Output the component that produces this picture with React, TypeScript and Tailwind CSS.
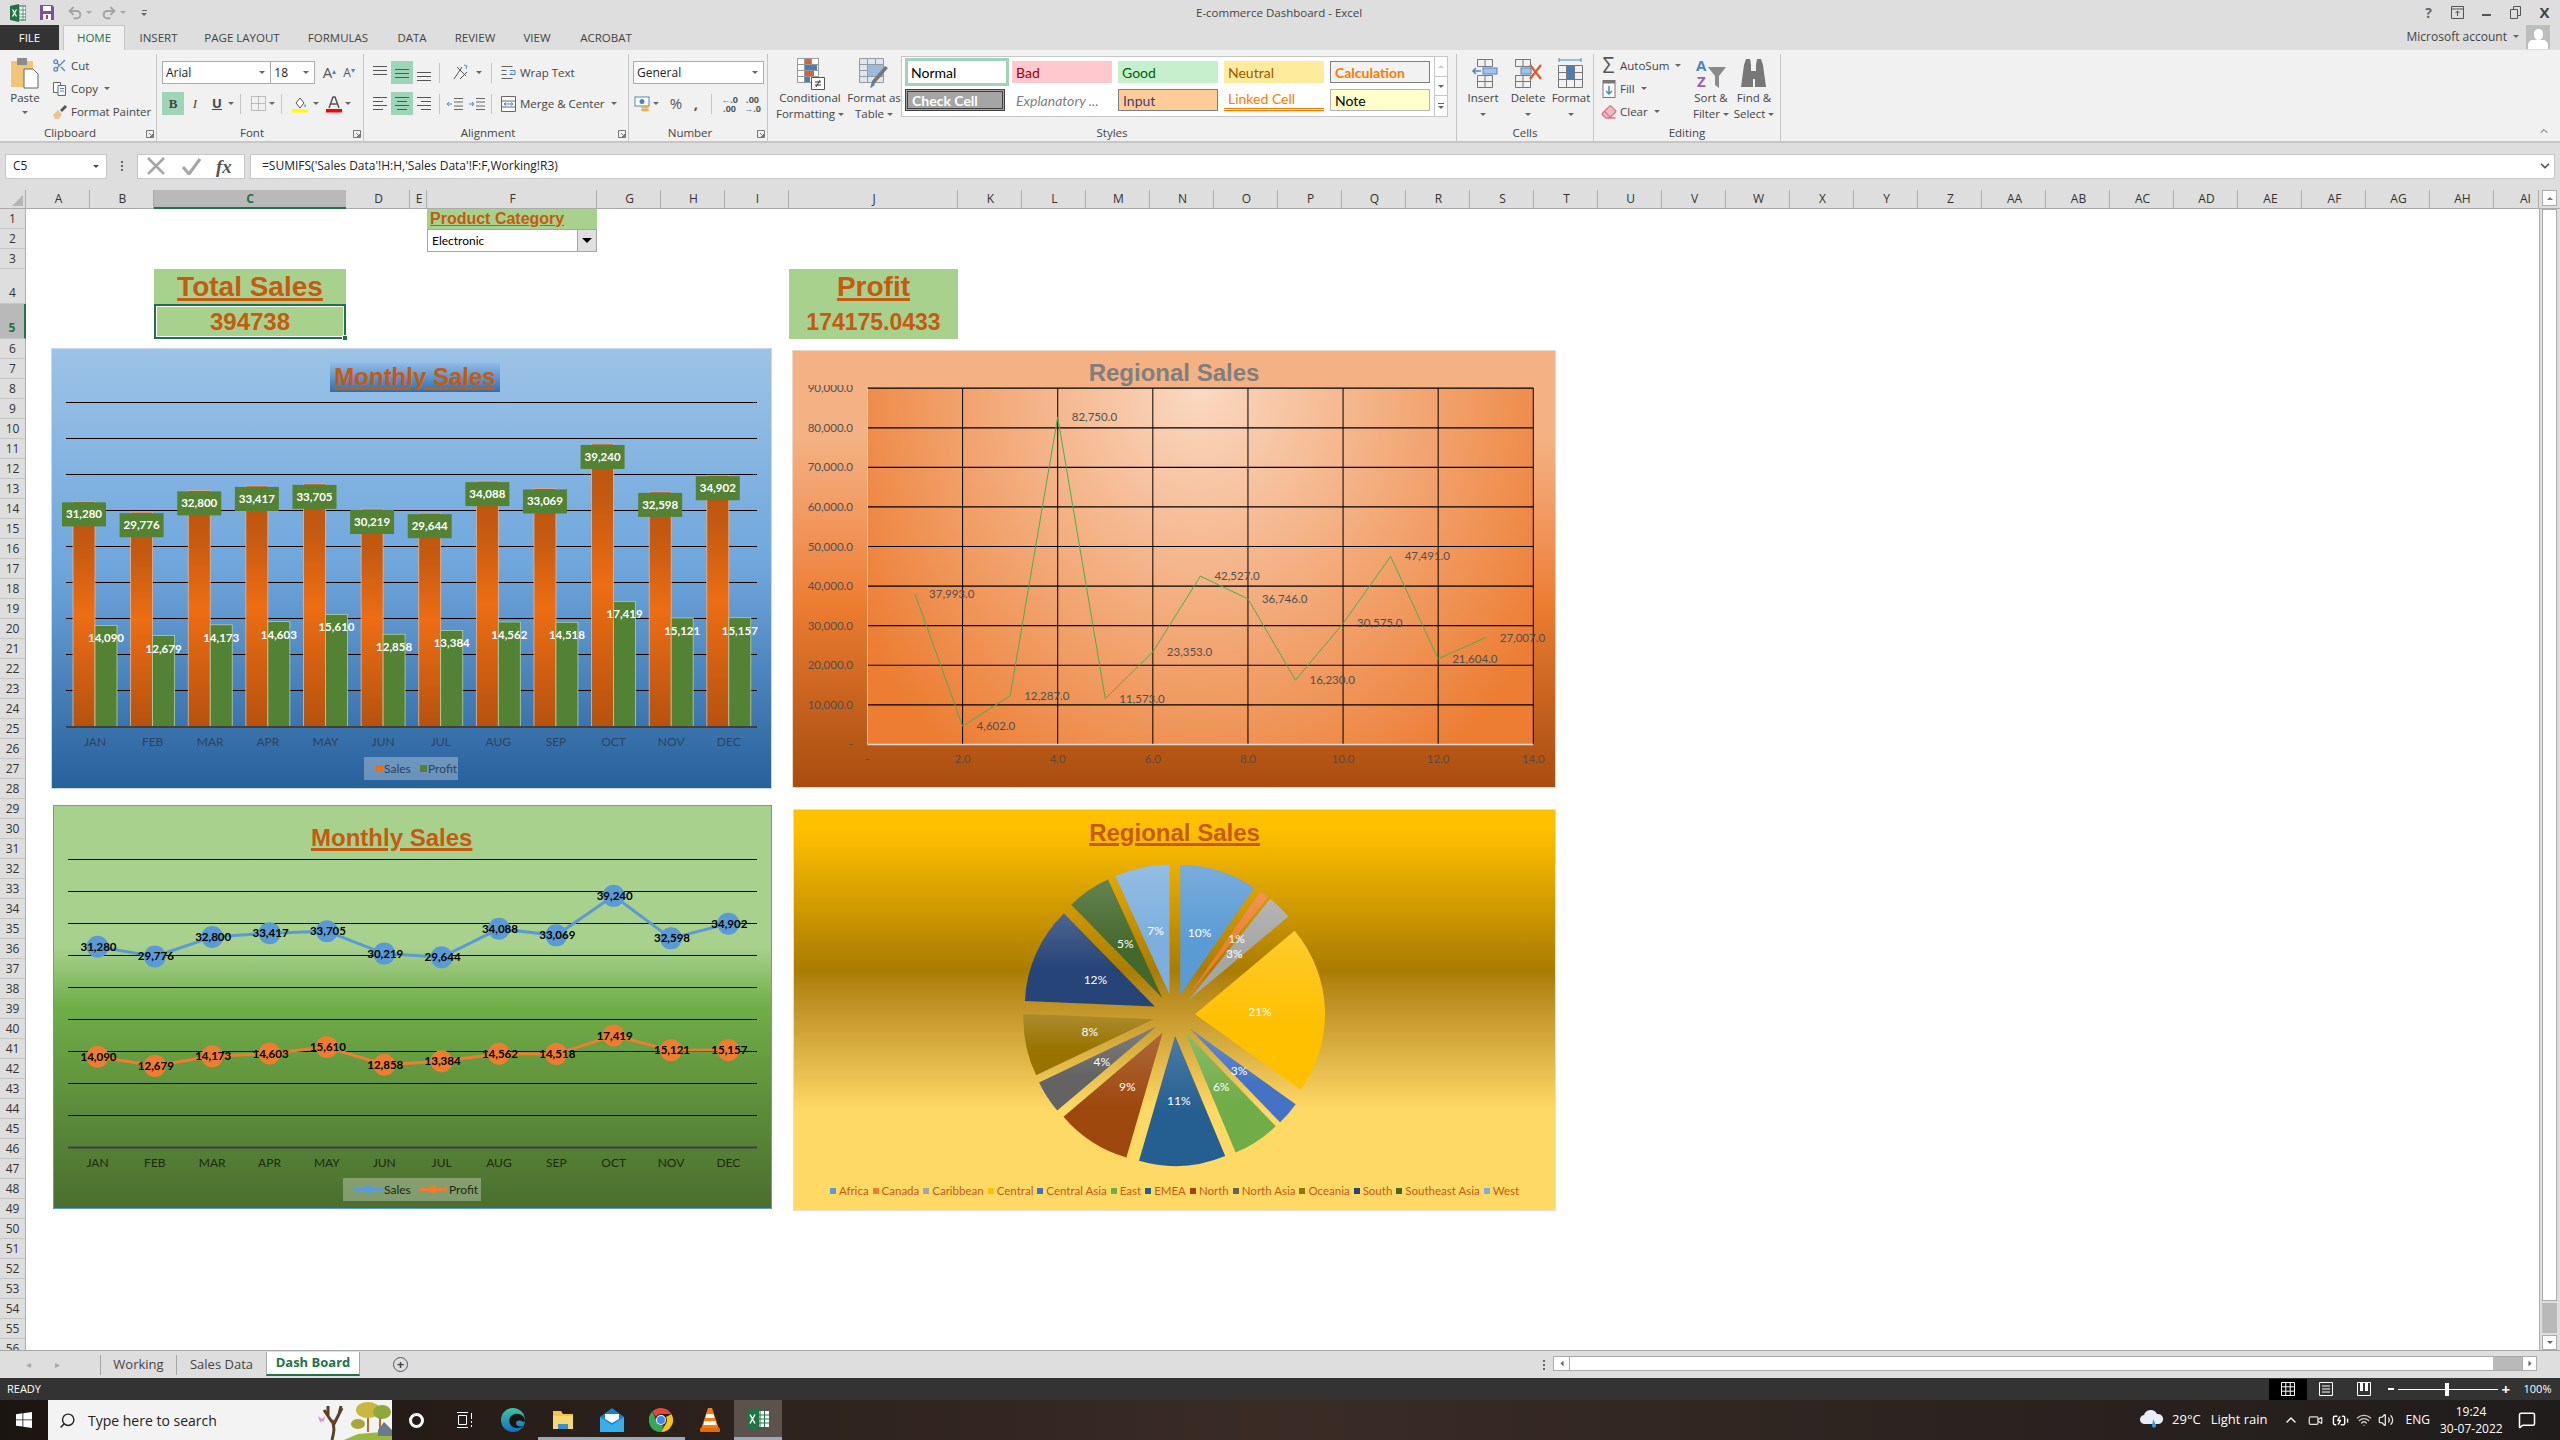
import { Undo2, Redo2, Scissors, Eraser, Search, ChevronUp, ChevronDown, Volume2, MessageSquare, Wifi, BatteryCharging, Video } from 'lucide-react';

const months = ['JAN', 'FEB', 'MAR', 'APR', 'MAY', 'JUN', 'JUL', 'AUG', 'SEP', 'OCT', 'NOV', 'DEC'];
const sales = [31280, 29776, 32800, 33417, 33705, 30219, 29644, 34088, 33069, 39240, 32598, 34902];
const profit = [14090, 12679, 14173, 14603, 15610, 12858, 13384, 14562, 14518, 17419, 15121, 15157];
const fmt = (n: number) => n.toLocaleString('en-US');

const regions = [
  { name: 'Africa', value: 37993, color: '#5b9bd5', swatch: 'bg-[#5b9bd5]' },
  { name: 'Canada', value: 4602, color: '#ed7d31', swatch: 'bg-[#ed7d31]' },
  { name: 'Caribbean', value: 12287, color: '#a5a5a5', swatch: 'bg-[#a5a5a5]' },
  { name: 'Central', value: 82750, color: '#ffc000', swatch: 'bg-[#ffc000]' },
  { name: 'Central Asia', value: 11573, color: '#4472c4', swatch: 'bg-[#4472c4]' },
  { name: 'East', value: 23353, color: '#70ad47', swatch: 'bg-[#70ad47]' },
  { name: 'EMEA', value: 42527, color: '#255e91', swatch: 'bg-[#255e91]' },
  { name: 'North', value: 36746, color: '#9e480e', swatch: 'bg-[#9e480e]' },
  { name: 'North Asia', value: 16230, color: '#636363', swatch: 'bg-[#636363]' },
  { name: 'Oceania', value: 30575, color: '#997300', swatch: 'bg-[#997300]' },
  { name: 'South', value: 47491, color: '#264478', swatch: 'bg-[#264478]' },
  { name: 'Southeast Asia', value: 21604, color: '#43682b', swatch: 'bg-[#43682b]' },
  { name: 'West', value: 27007, color: '#7cafdd', swatch: 'bg-[#7cafdd]' },
];

const columns = [
  { name: 'A', w: 'w-16' }, { name: 'B', w: 'w-16' }, { name: 'C', w: 'w-[192px]' }, { name: 'D', w: 'w-16' },
  { name: 'E', w: 'w-[17px]' }, { name: 'F', w: 'w-[170px]' }, { name: 'G', w: 'w-16' }, { name: 'H', w: 'w-16' },
  { name: 'I', w: 'w-16' }, { name: 'J', w: 'w-[169px]' },
  ...['K', 'L', 'M', 'N', 'O', 'P', 'Q', 'R', 'S', 'T', 'U', 'V', 'W', 'X', 'Y', 'Z', 'AA', 'AB', 'AC', 'AD', 'AE', 'AF', 'AG', 'AH'].map((name) => ({ name, w: 'w-16' })),
  { name: 'AI', w: 'w-[45px] pl-[19px]' },
];

function Caret({ className = 'border-t-[#666]' }: { className?: string }) {
  return <span className={`inline-block w-0 h-0 border-x-[3px] border-t-[3px] border-x-transparent ${className}`} />;
}

function Launcher() {
  return (
    <svg className="absolute right-[2px] top-[6px]" width="8" height="8" viewBox="0 0 8 8" fill="none" stroke="#777">
      <path d="M.5 .5h7v7h-7zM3 3l3.5 3.5M6.5 4v2.5H4" strokeWidth="1" />
    </svg>
  );
}

function Lines({ kind }: { kind: 'left' | 'center' | 'right' | 'top' | 'middle' | 'bottom' }) {
  const y = kind === 'top' ? [2, 6, 10] : kind === 'bottom' ? [8, 12, 16] : kind === 'middle' ? [5, 9, 13] : [2, 6, 10, 14];
  return (
    <svg width="16" height="18" viewBox="0 0 16 18" stroke="#555" strokeWidth="1">
      {y.map((v, i) => {
        const short = i % 2 === 1;
        const x1 = kind === 'right' && short ? 5 : kind === 'center' && short ? 3 : 1;
        const x2 = kind === 'left' && short ? 11 : kind === 'center' && short ? 13 : 15;
        return <line key={v} x1={x1} x2={x2} y1={v + 0.5} y2={v + 0.5} />;
      })}
    </svg>
  );
}

function RibbonGroup({ label, w, launcher, children }: { label: string; w: string; launcher?: boolean; children: React.ReactNode }) {
  return (
    <div className={`${w} flex flex-col h-[88px] mt-[4px] border-r border-[#c6c6c6]`}>
      <div className="flex-1 min-h-0">{children}</div>
      <div className={`relative h-[18px] text-center text-[11.5px] leading-[18px] text-[#444] ${launcher ? 'pr-[16px]' : ''}`}>
        {label}
        {launcher && <Launcher />}
      </div>
    </div>
  );
}

function BigButton({ icon, lines, w }: { icon: React.ReactNode; lines: string[]; w: string }) {
  return (
    <div className={`${w} flex flex-col items-center pt-[3px] text-[11.5px] leading-[16px] text-[#444]`}>
      <div className="h-[33px] flex items-center">{icon}</div>
      <div className="whitespace-nowrap">{lines[0]}</div>
      <div className="whitespace-nowrap flex items-center gap-[3px] h-[16px]">
        {lines[1]}
        <Caret />
      </div>
    </div>
  );
}

function SmallAction({ icon, label, caret }: { icon: React.ReactNode; label: string; caret?: boolean }) {
  return (
    <div className="flex items-center h-[23px] text-[11.5px] text-[#444] whitespace-nowrap">
      <span className="w-[19px] flex justify-center">{icon}</span>
      <span className="ml-[2px]">{label}</span>
      {caret && <span className="ml-[6px] flex"><Caret /></span>}
    </div>
  );
}

function ToolBtn({ children, active, w = 'w-[22px]' }: { children: React.ReactNode; active?: boolean; w?: string }) {
  return (
    <div className={`${w} h-[23px] flex items-center justify-center ${active ? 'bg-[#9fd5b7]' : ''}`}>{children}</div>
  );
}

function GridIcon({ children }: { children?: React.ReactNode }) {
  return (
    <svg width="30" height="33" viewBox="0 0 30 33" fill="none" stroke="#777">
      {children}
    </svg>
  );
}

function Gallery() {
  const base = 'h-[22px] px-[4px] flex items-center text-[14px] font-[\'Lato\',sans-serif] whitespace-nowrap';
  return (
    <div className="w-[547px] h-[61px] mt-[2px] bg-white border border-[#c6c6c6] flex">
      <div className="flex-1 grid grid-cols-[107px_106px_106px_106px_104px] grid-rows-[30px_26px] items-center pl-[3px]">
        <div className="w-[104px] h-[28px] px-[3px] flex items-center text-[14px] font-['Lato',sans-serif] border-[3px] border-[#9fd5b7] text-black">Normal</div>
        <div className={`${base} w-[100px] bg-[#ffc7ce] text-[#9c0006]`}>Bad</div>
        <div className={`${base} w-[100px] bg-[#c6efce] text-[#006100]`}>Good</div>
        <div className={`${base} w-[100px] bg-[#ffeb9c] text-[#9c5700]`}>Neutral</div>
        <div className={`${base} w-[100px] bg-[#f2f2f2] text-[#fa7d00] font-bold border border-[#7f7f7f]`}>Calculation</div>
        <div className={`${base} w-[100px] bg-[#a5a5a5] text-white font-bold border-[3px] border-double border-[#3f3f3f]`}>Check Cell</div>
        <div className={`${base} w-[100px] text-[#7f7f7f] italic`}>Explanatory ...</div>
        <div className={`${base} w-[100px] bg-[#ffcc99] text-[#3f3f76] border border-[#7f7f7f]`}>Input</div>
        <div className={`${base} w-[100px] text-[#fa7d00] border-b-[3px] border-double border-[#fa7d00]`}>Linked Cell</div>
        <div className={`${base} w-[100px] bg-[#ffffcc] text-black border border-[#b2b2b2]`}>Note</div>
      </div>
      <div className="w-[14px] flex flex-col border-l border-[#c6c6c6]">
        <div className="h-[20px] flex items-center justify-center border-b border-[#c6c6c6]"><Caret className="border-t-[#ccc] rotate-180" /></div>
        <div className="h-[19px] flex items-center justify-center border-b border-[#c6c6c6]"><Caret /></div>
        <div className="h-[20px] flex flex-col items-center justify-center gap-[2px]"><span className="w-[6px] h-px bg-[#666]" /><Caret /></div>
      </div>
    </div>
  );
}

function Ribbon() {
  return (
    <div className="flex h-[93px] bg-[#f1f1f1] border-b-2 border-[#c6c6c6]">
      <RibbonGroup label="Clipboard" w="w-[157px]" launcher>
        <div className="flex">
          <div className="w-[50px] flex flex-col items-center pt-[3px] text-[11.5px] text-[#444]">
            <svg width="30" height="32" viewBox="0 0 30 32">
              <rect x="1" y="4" width="22" height="26" rx="1" fill="#f0c674" />
              <rect x="7" y="1" width="10" height="7" fill="#8c8c8c" />
              <path d="M14 12h9l5 5v14H14z" fill="#fff" stroke="#666" />
            </svg>
            <span className="mt-[1px] leading-[16px]">Paste</span>
            <span className="mt-[5px] flex"><Caret /></span>
          </div>
          <div>
            <SmallAction icon={<Scissors size={15} color="#5b7fb5" />} label="Cut" />
            <SmallAction
              icon={
                <svg width="15" height="15" viewBox="0 0 15 15" fill="#fff" stroke="#666">
                  <path d="M1.5 1.5h7v10h-7z" />
                  <path d="M6 4.5h7.5v10H6z" />
                  <path d="M8 7.5h4M8 10h4" stroke="#5b7fb5" />
                </svg>
              }
              label="Copy"
              caret
            />
            <SmallAction
              icon={
                <svg width="16" height="16" viewBox="0 0 16 16">
                  <path d="M1 11l5-5 4 4-3 5H3z" fill="#e8c48e" />
                  <path d="M8 6l5-5 2 2-5 5z" fill="#555" />
                </svg>
              }
              label="Format Painter"
            />
          </div>
        </div>
      </RibbonGroup>

      <RibbonGroup label="Font" w="w-[207px]" launcher>
        <div className="pt-[7px] pl-[5px]">
          <div className="flex items-center h-[23px] text-[12px] text-[#222]">
            <div className="w-[111px] h-full bg-white border border-[#ababab] pl-[3px] flex items-center justify-between pr-[5px]">
              Arial <Caret />
            </div>
            <div className="w-[44px] h-full bg-white border border-[#ababab] border-l-0 pl-[3px] flex items-center justify-between pr-[5px]">
              18 <Caret />
            </div>
            <span className="ml-[8px] w-[20px] text-[15px] text-[#555]">A<sup className="text-[#4a86c5] text-[8px]">▴</sup></span>
            <span className="ml-[1px] w-[20px] text-[12px] text-[#555]">A<sup className="text-[#4a86c5] text-[8px]">▾</sup></span>
          </div>
          <div className="flex items-center h-[23px] mt-[8px] text-[13px] text-[#444]">
            <ToolBtn active><span className="font-bold font-['Liberation_Serif',serif]">B</span></ToolBtn>
            <ToolBtn><span className="italic font-['Liberation_Serif',serif]">I</span></ToolBtn>
            <ToolBtn><span className="underline font-bold">U</span></ToolBtn>
            <span className="w-[12px] flex"><Caret /></span>
            <span className="w-px h-[20px] bg-[#c6c6c6] mr-[6px]" />
            <ToolBtn>
              <svg width="15" height="15" viewBox="0 0 15 15" fill="none" stroke="#888" strokeDasharray="1 1"><path d="M.5 .5h14v14H.5zM7.5 .5v14M.5 7.5h14" /></svg>
            </ToolBtn>
            <span className="w-[12px] flex"><Caret /></span>
            <span className="w-px h-[20px] bg-[#c6c6c6] mr-[5px]" />
            <ToolBtn w="w-[26px]">
              <svg width="18" height="18" viewBox="0 0 18 18">
                <path d="M5 8l4-5 4 5-4 5z" fill="#fff" stroke="#555" />
                <path d="M14 9c1 1.5 1.5 2.500 0 3-1-.5-1-1.500 0-3" fill="#4a86c5" />
                <rect x="1" y="14" width="16" height="3.500" fill="#ffff00" />
              </svg>
            </ToolBtn>
            <span className="w-[10px] flex"><Caret /></span>
            <ToolBtn>
              <svg width="18" height="18" viewBox="0 0 18 18">
                <path d="M4 13L8 2h2l4 11M6 9h6" fill="none" stroke="#555" strokeWidth="1.500" />
                <rect x="1" y="14" width="16" height="3.500" fill="#ff0000" />
              </svg>
            </ToolBtn>
            <span className="w-[8px] flex"><Caret /></span>
          </div>
        </div>
      </RibbonGroup>

      <RibbonGroup label="Alignment" w="w-[265px]" launcher>
        <div className="pt-[7px] pl-[5px]">
          <div className="flex items-center h-[23px]">
            <ToolBtn><Lines kind="top" /></ToolBtn>
            <ToolBtn active><Lines kind="middle" /></ToolBtn>
            <ToolBtn><Lines kind="bottom" /></ToolBtn>
            <span className="w-px h-[20px] bg-[#c6c6c6] mx-[4px]" />
            <span className="w-[32px] flex justify-center">
              <svg width="17" height="17" viewBox="0 0 17 17" fill="none" stroke="#555"><path d="M2 15L10 3M5 3l9 9M8 15l7-7" /><path d="M12 1l3 1-1 3" stroke="#4a86c5" /></svg>
            </span>
            <span className="w-[15px] flex"><Caret /></span>
            <span className="w-px h-[20px] bg-[#c6c6c6] mr-[7px]" />
            <SmallAction
              icon={<svg width="15" height="16" viewBox="0 0 15 16" fill="none" stroke="#666"><path d="M.5 1.500h11M.5 5.500h5M.5 9.500h5M.5 13.500h11" /><path d="M9 5.500h5v4H9l2-2" stroke="#4a86c5" /></svg>}
              label="Wrap Text"
            />
          </div>
          <div className="flex items-center h-[23px] mt-[8px]">
            <ToolBtn><Lines kind="left" /></ToolBtn>
            <ToolBtn active><Lines kind="center" /></ToolBtn>
            <ToolBtn><Lines kind="right" /></ToolBtn>
            <span className="w-px h-[20px] bg-[#c6c6c6] mx-[4px]" />
            <ToolBtn>
              <svg width="16" height="14" viewBox="0 0 16 14" fill="none" stroke="#666"><path d="M7 1.500h9M7 5h9M7 9h9M7 12.500h9" /><path d="M5 7H0l2-2M0 7l2 2" stroke="#4a86c5" /></svg>
            </ToolBtn>
            <ToolBtn>
              <svg width="16" height="14" viewBox="0 0 16 14" fill="none" stroke="#666"><path d="M7 1.500h9M7 5h9M7 9h9M7 12.500h9" /><path d="M0 7h5L3 5M5 7L3 9" stroke="#4a86c5" /></svg>
            </ToolBtn>
            <span className="w-px h-[20px] bg-[#c6c6c6] ml-[3px] mr-[7px]" />
            <SmallAction
              icon={<svg width="15" height="16" viewBox="0 0 15 16" fill="#fff" stroke="#666"><path d="M.5 .5h14v15H.5zM.5 5h14M.5 11h14" /><path d="M3 8h9M3 8l2-1.500M3 8l2 1.500M12 8l-2-1.500M12 8l-2 1.500" stroke="#4a86c5" /></svg>}
              label="Merge & Center"
              caret
            />
          </div>
        </div>
      </RibbonGroup>

      <RibbonGroup label="Number" w="w-[139px]" launcher>
        <div className="pt-[7px] pl-[4px]">
          <div className="w-[131px] h-[23px] bg-white border border-[#ababab] pl-[3px] pr-[5px] flex items-center justify-between text-[12px] text-[#222]">
            General <Caret />
          </div>
          <div className="flex items-center h-[23px] mt-[8px] text-[#555]">
            <span className="w-[20px] flex justify-center">
              <svg width="18" height="18" viewBox="0 0 18 18"><rect x="1" y="2" width="14" height="9" fill="#fff" stroke="#4a86c5" /><circle cx="8" cy="6.500" r="2.500" fill="#4a86c5" /><ellipse cx="11" cy="12" rx="4" ry="1.500" fill="#e3b54c" /><ellipse cx="11" cy="15" rx="4" ry="1.500" fill="#e3b54c" /></svg>
            </span>
            <span className="w-[12px] flex"><Caret /></span>
            <span className="w-[22px] text-center text-[15px]">%</span>
            <span className="w-[18px] text-center text-[15px] font-bold">,</span>
            <span className="w-px h-[20px] bg-[#c6c6c6] mx-[6px]" />
            <span className="w-[23px] text-[9px] leading-[9px] text-center font-bold"><span className="text-[#4a86c5]">←</span>.0<br />.00</span>
            <span className="w-[23px] text-[9px] leading-[9px] text-center font-bold">.00<br /><span className="text-[#4a86c5]">→</span>.0</span>
          </div>
        </div>
      </RibbonGroup>

      <RibbonGroup label="Styles" w="w-[689px]">
        <div className="flex pl-[8px]">
          <BigButton
            w="w-[68px]"
            lines={['Conditional', 'Formatting']}
            icon={
              <svg width="30" height="33" viewBox="0 0 30 33" fill="#fff" stroke="#999">
                <path d="M2.500 1.500h21v24h-21z" />
                <path d="M9.500 1.500v24M16.500 1.500v24M2.500 7.500h21M2.500 13.500h21M2.500 19.500h21" />
                <rect x="10" y="2" width="6" height="5" fill="#d9603b" stroke="none" />
                <rect x="10" y="8" width="12" height="5" fill="#4a7fb5" stroke="none" />
                <rect x="10" y="14" width="9" height="5" fill="#d9603b" stroke="none" />
                <rect x="10" y="20" width="5" height="5" fill="#4a7fb5" stroke="none" />
                <path d="M16.500 20.500h13v12h-13z" stroke="#555" />
                <path d="M20 25h6M20 28h6M25 23l-4 7" stroke="#333" />
              </svg>
            }
          />
          <BigButton
            w="w-[60px]"
            lines={['Format as', 'Table']}
            icon={
              <svg width="32" height="33" viewBox="0 0 32 33" fill="#dce6f2" stroke="#999">
                <path d="M1.500 1.500h24v24h-24z" />
                <path d="M9.500 1.500v24M17.500 1.500v24M1.500 7.500h24M1.500 13.500h24M1.500 19.500h24" />
                <rect x="10" y="8" width="15" height="11" fill="#9db9de" stroke="none" />
                <path d="M30 11l-12 14-5 6 1-7 13-15z" fill="#777" stroke="none" />
                <path d="M14 25l3 3-5 3z" fill="#4a86c5" stroke="none" />
              </svg>
            }
          />
          <span className="-ml-[3px]"><Gallery /></span>
        </div>
      </RibbonGroup>

      <RibbonGroup label="Cells" w="w-[137px]">
        <div className="grid grid-cols-[48px_42px_44px] pl-[2px]">
          {[
            { name: 'Insert', path: <><path d="M9.500 2.500h15v7h-15zM17 2.500v7M9.500 18.500h15v12h-15zM17 18.500v12M9.500 24.500h15" /><rect x="15" y="11" width="14" height="6" fill="#a7c3e4" stroke="#4a86c5" /><path d="M13 14H5m3-3l-3 3 3 3" stroke="#4a86c5" strokeWidth="1.500" /></> },
            { name: 'Delete', path: <><path d="M2.500 2.500h15v7h-15zM10 2.500v7M2.500 18.500h15v12h-15zM10 18.500v12M2.500 24.500h15" /><rect x="8" y="11" width="10" height="6" fill="#a7c3e4" stroke="#4a86c5" /><path d="M17 8l11 14M28 8L17 22" stroke="#d9603b" strokeWidth="2.500" /></> },
            { name: 'Format', path: <><path d="M3 3h22M3 1v4M25 1v4" stroke="#4a86c5" /><path d="M2.500 8.500h24v22h-24zM2.500 15.500h24M2.500 22.500h24M10.500 8.500v22M18.500 8.500v22" /><rect x="11" y="9" width="7" height="13" fill="#4a7fb5" stroke="none" /></> },
          ].map((c) => (
            <div key={c.name} className="flex flex-col items-center pt-[3px] text-[11.5px] leading-[16px] text-[#444]">
              <div className="h-[33px] flex items-center"><GridIcon>{c.path}</GridIcon></div>
              <div>{c.name}</div>
              <div className="h-[16px] flex items-center"><Caret /></div>
            </div>
          ))}
        </div>
      </RibbonGroup>

      <RibbonGroup label="Editing" w="w-[187px]">
        <div className="flex pl-[5px]">
          <div className="w-[91px]">
            <SmallAction icon={<span className="text-[21px] leading-none text-[#555]">Σ</span>} label="AutoSum" caret />
            <SmallAction
              icon={<svg width="14" height="18" viewBox="0 0 14 18"><rect x="1" y=".5" width="12" height="17" fill="#fff" stroke="#777" /><rect x="1" y=".5" width="12" height="3" fill="#777" /><path d="M7 6v8m-3-3l3 3 3-3" stroke="#4a86c5" strokeWidth="1.500" fill="none" /></svg>}
              label="Fill"
              caret
            />
            <SmallAction icon={<Eraser size={16} color="#d9738a" fill="#f3b6c3" />} label="Clear" caret />
          </div>
          <BigButton
            w="w-[42px]"
            lines={['Sort &', 'Filter']}
            icon={
              <svg width="32" height="33" viewBox="0 0 32 33">
                <text x="1" y="14" fontSize="15" fontWeight="700" fill="#4a86c5">A</text>
                <text x="2" y="30" fontSize="15" fontWeight="700" fill="#9b5fb5">Z</text>
                <path d="M13 10h18l-7 9v12l-4-3v-9z" fill="#8a8a8a" />
              </svg>
            }
          />
          <BigButton
            w="w-[44px]"
            lines={['Find &', 'Select']}
            icon={
              <svg width="28" height="33" viewBox="0 0 28 33" fill="#777">
                <path d="M4 8l2-6h4l1 6v6h5V8l1-6h4l2 6 3 22H15v-8h-2v8H1z" />
              </svg>
            }
          />
        </div>
      </RibbonGroup>

      <div className="flex-1 flex items-end justify-end pr-[10px] pb-[4px]">
        <ChevronUp size={12} color="#555" />
      </div>
    </div>
  );
}

function TitleBar() {
  return (
    <div className="h-[25px] flex items-center relative text-[12px] text-[#444]">
      <div className="flex items-center">
        <span className="ml-[10px]">
          <svg width="16" height="18" viewBox="0 0 16 18">
            <rect x="5" y="2" width="11" height="14" fill="#fff" stroke="#217346" />
            <path d="M9 2v14M13 2v14M5 6h11M5 10h11M5 13h11" stroke="#217346" strokeWidth=".7" />
            <path d="M0 2l9-2v18l-9-2z" fill="#217346" />
            <path d="M2.500 5.500l4 7M6.500 5.500l-4 7" stroke="#fff" strokeWidth="1.300" />
          </svg>
        </span>
        <span className="ml-[13px]">
          <svg width="16" height="17" viewBox="0 0 16 17">
            <path d="M1 1h12l2 2v13H1z" fill="#7e4fa0" />
            <rect x="4" y="2" width="8" height="5" fill="#fff" />
            <rect x="4" y="10" width="8" height="6" fill="#fff" />
            <rect x="7" y="11" width="2" height="4" fill="#7e4fa0" />
          </svg>
        </span>
        <span className="ml-[12px] flex items-center gap-[3px]"><Undo2 size={16} color="#a5a5a5" strokeWidth={3} /><Caret className="border-t-[#a5a5a5]" /></span>
        <span className="ml-[9px] flex items-center gap-[3px]"><Redo2 size={16} color="#a5a5a5" strokeWidth={3} /><Caret className="border-t-[#a5a5a5]" /></span>
        <span className="ml-[15px] flex flex-col items-center gap-[2px]"><span className="w-[5px] h-px bg-[#666]" /><Caret /></span>
      </div>
      <div className="absolute left-[1196px] w-[166px] text-center whitespace-nowrap text-[11.5px]">E-commerce Dashboard - Excel</div>
      <div className="ml-auto flex items-center text-[#666] font-bold h-full">
        <span className="w-[29px] text-center text-[14px]">?</span>
        <span className="w-[29px] flex justify-center">
          <svg width="13" height="13" viewBox="0 0 13 13" fill="none" stroke="#555"><path d="M.5 .5h12v12H.5zM.5 3h12M6.500 10V5M4.500 7l2-2 2 2" /></svg>
        </span>
        <span className="w-[29px] flex justify-center"><span className="w-[9px] h-[2px] bg-[#555] mt-[5px]" /></span>
        <span className="w-[29px] flex justify-center">
          <svg width="11" height="13" viewBox="0 0 11 13" fill="#dedede" stroke="#555"><path d="M3.500 .5h7v9h-7z" /><path d="M.5 3.500h7v9h-7z" /></svg>
        </span>
        <span className="w-[29px] text-center text-[15px] text-[#444] mr-[1px]">X</span>
      </div>
    </div>
  );
}

function TabRow() {
  const tabs = [
    { t: 'INSERT', w: 'w-[67px]' }, { t: 'PAGE LAYOUT', w: 'w-[100px]' }, { t: 'FORMULAS', w: 'w-[92px]' }, { t: 'DATA', w: 'w-[56px]' },
    { t: 'REVIEW', w: 'w-[70px]' }, { t: 'VIEW', w: 'w-[54px]' }, { t: 'ACROBAT', w: 'w-[84px]' },
  ];
  return (
    <div className="h-[25px] flex items-end relative text-[11.5px] text-[#444]">
      <div className="w-[59px] h-[25px] bg-[#333] text-white flex items-center justify-center">FILE</div>
      <div className="ml-[4px] w-[62px] h-[25px] bg-[#f1f1f1] border border-b-0 border-[#c6c6c6] text-[#217346] flex items-center justify-center">HOME</div>
      {tabs.map((t) => (
        <div key={t.t} className={`${t.w} h-[25px] flex items-center justify-center whitespace-nowrap`}>{t.t}</div>
      ))}
      <div className="ml-auto flex items-center h-[25px] mb-[1px]">
        <span className="text-[12px]">Microsoft account</span>
        <span className="ml-[6px] flex"><Caret /></span>
        <span className="ml-[7px] mr-[10px] w-[24px] h-[24px] bg-[#bdbdbd] flex flex-col items-center justify-end overflow-hidden">
          <span className="w-[9px] h-[11px] rounded-full bg-white" />
          <span className="w-[20px] h-[9px] bg-white rounded-t-[5px]" />
        </span>
      </div>
    </div>
  );
}

function FormulaBar() {
  return (
    <div className="h-[47px] flex items-center pl-[5px] pr-[5px] pt-[10px] pb-[11px]">
      <div className="w-[102px] h-[25px] bg-white border border-[#c6c6c6] flex items-center justify-between pl-[7px] pr-[7px] text-[12px] text-[#222]">
        C5 <Caret className="border-t-[#444]" />
      </div>
      <div className="w-[30px] flex flex-col items-center gap-[2px]">
        <span className="w-[2px] h-[2px] bg-[#666]" />
        <span className="w-[2px] h-[2px] bg-[#666]" />
        <span className="w-[2px] h-[2px] bg-[#666]" />
      </div>
      <div className="w-[108px] h-[25px] bg-white border border-[#c6c6c6] flex items-center">
        <svg className="ml-[9px]" width="18" height="18" viewBox="0 0 18 18" stroke="#a6a6a6" strokeWidth="2.500" fill="none"><path d="M1 1l16 16M17 1L1 17" /></svg>
        <svg className="ml-[17px]" width="19" height="17" viewBox="0 0 19 17" stroke="#a6a6a6" strokeWidth="3" fill="none"><path d="M1 9l6 7L18 1" /></svg>
        <span className="ml-[15px] text-[19px] italic font-bold font-['Liberation_Serif',serif] text-[#555] leading-none">fx</span>
      </div>
      <div className="ml-[5px] flex-1 h-[25px] bg-white border border-[#c6c6c6] flex items-center justify-between pl-[11px] pr-[2px] text-[12px] text-[#222]">
        <span>=SUMIFS('Sales Data'!H:H,'Sales Data'!F:F,Working!R3)</span>
        <ChevronDown size={14} color="#555" strokeWidth={3} />
      </div>
    </div>
  );
}

function ColumnHeader() {
  return (
    <div className="h-[19px] flex text-[12px] text-[#333]">
      <div className="w-[26px] border-b border-r border-[#ababab] flex items-end justify-end pr-[2px] pb-[2px]">
        <svg width="11" height="11" viewBox="0 0 11 11"><path d="M11 0v11H0z" fill="#b5b5b5" /></svg>
      </div>
      {columns.map((c) =>
        c.name === 'C' ? (
          <div key={c.name} className={`${c.w} bg-[#b9b9b9] border-b-2 border-[#217346] flex items-center justify-center font-bold text-[#217346]`}>{c.name}</div>
        ) : (
          <div key={c.name} className={`${c.w} pl-[2px] border-b border-r border-[#ababab] flex items-center justify-center`}>{c.name}</div>
        ),
      )}
      <div className="flex-1 border-b border-[#ababab] pl-[3px] pr-[3px]">
        <div className="w-[15px] h-[16px] bg-white border border-[#ababab] flex items-center justify-center"><Caret className="border-t-[#777] rotate-180" /></div>
      </div>
    </div>
  );
}

function RowHeader() {
  const rows = Array.from({ length: 56 }, (_, i) => i + 1);
  return (
    <div className="w-[26px] shrink-0 overflow-hidden text-[12px] text-[#333] flex flex-col">
      {rows.map((r) => {
        const h = r === 4 || r === 5 ? 'h-[35px] pt-[14px]' : 'h-[20px]';
        const selected = r === 5 ? 'bg-[#b9b9b9] border-r-2 border-[#217346] text-[#217346] font-bold' : 'border-r border-[#ababab]';
        return (
          <div key={r} className={`${h} ${selected} shrink-0 border-b border-b-[#c6c6c6] flex items-center justify-center`}>{r}</div>
        );
      })}
    </div>
  );
}

function BarsChart() {
  const base = 335;
  const y = (v: number) => (v / 45000) * 324.6;
  const cat = 57.62;
  return (
    <div className="absolute left-[25px] top-[139px] w-[721px] h-[441px] border border-[#c9d8e8] bg-linear-to-b from-[#9dc3e6] via-[#6ea6dc] via-50% to-[#27609b]">
      <div className="ml-[278px] mt-[13px] w-[170px] h-[30px] flex justify-center items-center bg-linear-to-b from-[#93bee6] to-[#2e6fae] text-[24px] font-bold underline decoration-[3px] underline-offset-[2px] leading-none text-[#c55a11] font-['Liberation_Sans',sans-serif]">
        Monthly Sales
      </div>
      <svg width="719" height="396" viewBox="0 0 719 396" className="font-['Lato',sans-serif]">
        <defs>
          <linearGradient id="barFill" x1="0" y1="0" x2="0" y2="1">
            <stop offset="0" stopColor="#b9530f" />
            <stop offset="0.2" stopColor="#c55a11" />
            <stop offset="0.5" stopColor="#ed6d14" />
            <stop offset="1" stopColor="#b5520f" />
          </linearGradient>
        </defs>
        {[0, 1, 2, 3, 4, 5, 6, 7, 8].map((i) => (
          <line key={i} x1="14" x2="705" y1={10.500 + i * 36} y2={10.500 + i * 36} stroke="#000" />
        ))}
        {months.map((m, i) => {
          const cx = 43 + i * cat;
          const hs = y(sales[i]);
          const hp = y(profit[i]);
          return (
            <g key={m}>
              <rect x={cx - 22} y={base - hs} width="22" height={hs} fill="url(#barFill)" stroke="#e2b79b" strokeWidth="0.800" />
              <rect x={cx} y={base - hp} width="22" height={hp} fill="#548235" stroke="#b4cfa2" strokeWidth="0.800" />
            </g>
          );
        })}
        <line x1="14" x2="705" y1={base} y2={base} stroke="#404040" strokeWidth="2" />
        {months.map((m, i) => {
          const cx = 43 + i * cat;
          const hs = y(sales[i]);
          const hp = y(profit[i]);
          return (
            <g key={m}>
              <rect x={cx - 33} y={base - hs + 1} width="44" height="24" fill="#548235" />
              <text x={cx - 11} y={base - hs + 17} textAnchor="middle" fontSize="11.500" fontWeight="700" fill="#fff">{fmt(sales[i])}</text>
              <text x={cx + 11} y={base - hp + 17} textAnchor="middle" fontSize="11.500" fontWeight="700" fill="#fff">{fmt(profit[i])}</text>
              <text x={cx} y={354} textAnchor="middle" fontSize="12" fill="#2a4560">{m}</text>
            </g>
          );
        })}
        <rect x="312" y="365" width="94" height="23" fill="#fff" fillOpacity="0.3" />
        <rect x="324" y="373" width="7" height="7" fill="#ed6d14" />
        <text x="332" y="381" fontSize="12" fill="#2a4560">Sales</text>
        <rect x="368" y="373" width="7" height="7" fill="#548235" />
        <text x="376" y="381" fontSize="12" fill="#2a4560">Profit</text>
      </svg>
    </div>
  );
}

function RegionalLineChart() {
  const px = (x: number) => 74.500 + (x / 14) * 665.8;
  const py = (v: number) => 359.400 - (v / 90000) * 356.2;
  const points = regions.map((r, i) => `${px(i + 1)},${py(r.value)}`).join(' ');
  return (
    <div className="absolute left-[766px] top-[141px] w-[764px] h-[438px] border border-[#e8d8cc] bg-linear-to-b from-[#f4b183] from-[20%] via-[#ed7d31] via-[58%] to-[#a84d0e]">
      <div className="h-[34px] pt-[10px] text-center text-[24px] leading-[24px] font-bold text-[#7f7f7f] font-['Liberation_Sans',sans-serif]">Regional Sales</div>
      <svg width="762" height="402" viewBox="0 0 762 402" className="font-['Lato',sans-serif]">
        <defs>
          <radialGradient id="plotFill" cx="0.5" cy="0" r="0.5" gradientTransform="translate(0.5 0) scale(1.2 2.6) translate(-0.5 0)">
            <stop offset="0" stopColor="#fad9c3" />
            <stop offset="1" stopColor="#ec7d33" />
          </radialGradient>
        </defs>
        <rect x="74.500" y="3" width="665.800" height="356.400" fill="url(#plotFill)" />
        {[10000, 20000, 30000, 40000, 50000, 60000, 70000, 80000, 90000].map((v) => (
          <line key={v} x1="74.500" x2="740.300" y1={py(v)} y2={py(v)} stroke="#000" strokeWidth="1.200" />
        ))}
        {[2, 4, 6, 8, 10, 12, 14].map((v) => (
          <line key={v} x1={px(v)} x2={px(v)} y1="3" y2="359.400" stroke="#000" />
        ))}
        <line x1="74.500" x2="740.300" y1="359.400" y2="359.400" stroke="#d9d9d9" strokeWidth="1.500" />
        <line x1="74.500" x2="74.500" y1="3" y2="359.400" stroke="#d9d9d9" />
        <polyline points={points} fill="none" stroke="#4cae4f" strokeWidth="1" />
        {regions.map((r, i) => (
          <text key={r.name} x={px(i + 1) + 14} y={py(r.value) + 4} fontSize="11.500" fill="#505050">{`${fmt(r.value)}.0`}</text>
        ))}
        {[0, 10000, 20000, 30000, 40000, 50000, 60000, 70000, 80000, 90000].map((v) => (
          <text key={v} x="60" y={py(v) + 4} textAnchor="end" fontSize="11.500" fill="#505050">{v === 0 ? '-' : `${fmt(v)}.0`}</text>
        ))}
        {[0, 2, 4, 6, 8, 10, 12, 14].map((v) => (
          <text key={v} x={px(v)} y="378" textAnchor="middle" fontSize="11.500" fill="#5e4a3a">{v === 0 ? '-' : `${v}.0`}</text>
        ))}
      </svg>
    </div>
  );
}

function SalesLineChart() {
  const cat = 57.35;
  const x = (i: number) => 43.500 + i * cat;
  const y = (v: number) => 292 - (v / 45000) * 288;
  return (
    <div className="absolute left-[27px] top-[596px] w-[719px] h-[404px] border border-[#5b9bd5] bg-linear-to-b from-[#a9d18e] from-[35%] via-[#70ad47] via-[50%] to-[#4a6e2f]">
      <div className="h-[49px] pt-[20px] pl-[257px] text-[24px] leading-[24px] font-bold underline decoration-[3px] underline-offset-[2px] text-[#c55a11] font-['Liberation_Sans',sans-serif]">Monthly Sales</div>
      <svg width="717" height="353" viewBox="0 0 717 353" className="font-['Lato',sans-serif]">
        {[0, 1, 2, 3, 4, 5, 6, 7, 8].map((i) => (
          <line key={i} x1="14" x2="703" y1={4.500 + i * 32} y2={4.500 + i * 32} stroke="#000" />
        ))}
        <line x1="14" x2="703" y1="292.500" y2="292.500" stroke="#404040" strokeWidth="2" />
        <polyline points={sales.map((v, i) => `${x(i)},${y(v)}`).join(' ')} fill="none" stroke="#5b9bd5" strokeWidth="3" />
        <polyline points={profit.map((v, i) => `${x(i)},${y(v)}`).join(' ')} fill="none" stroke="#ed7d31" strokeWidth="3" />
        {months.map((m, i) => (
          <g key={m}>
            <circle cx={x(i)} cy={y(sales[i])} r="11" fill="#5b9bd5" />
            <circle cx={x(i)} cy={y(profit[i])} r="11" fill="#ed7d31" />
            <text x={x(i) + 1} y={y(sales[i]) + 4} textAnchor="middle" fontSize="11.500" fontWeight="700" fill="#000">{fmt(sales[i])}</text>
            <text x={x(i) + 1} y={y(profit[i]) + 4} textAnchor="middle" fontSize="11.500" fontWeight="700" fill="#000">{fmt(profit[i])}</text>
            <text x={x(i)} y="312" textAnchor="middle" fontSize="12" fill="#1c2a12">{m}</text>
          </g>
        ))}
        <rect x="289" y="323" width="138" height="23" fill="#fff" fillOpacity="0.3" />
        <line x1="300" x2="329" y1="334.500" y2="334.500" stroke="#5b9bd5" strokeWidth="3" />
        <circle cx="314" cy="334.500" r="4" fill="#5b9bd5" />
        <text x="330" y="339" fontSize="12" fill="#1c2a12">Sales</text>
        <line x1="365" x2="393" y1="334.500" y2="334.500" stroke="#ed7d31" strokeWidth="3" />
        <circle cx="379" cy="334.500" r="4" fill="#ed7d31" />
        <text x="395" y="339" fontSize="12" fill="#1c2a12">Profit</text>
      </svg>
    </div>
  );
}

function PieChart() {
  const total = regions.reduce((s, r) => s + r.value, 0);
  const cx = 380;
  const cy = 155;
  const r = 130;
  const blast = 21;
  let acc = 0;
  const slices = regions.map((item) => {
    const a0 = (acc / total) * Math.PI * 2;
    acc += item.value;
    const a1 = (acc / total) * Math.PI * 2;
    const mid = (a0 + a1) / 2;
    const ax = cx + Math.sin(mid) * blast;
    const ay = cy - Math.cos(mid) * blast;
    const x0 = ax + Math.sin(a0) * r;
    const y0 = ay - Math.cos(a0) * r;
    const x1 = ax + Math.sin(a1) * r;
    const y1 = ay - Math.cos(a1) * r;
    const large = a1 - a0 > Math.PI ? 1 : 0;
    const nudge = item.name === 'Canada' ? { dx: 11, dy: -7 } : { dx: 0, dy: 0 };
    return {
      ...item,
      d: `M${ax} ${ay}L${x0} ${y0}A${r} ${r} 0 ${large} 1 ${x1} ${y1}Z`,
      lx: ax + Math.sin(mid) * r * 0.5 + nudge.dx,
      ly: ay - Math.cos(mid) * r * 0.5 + nudge.dy,
      pct: Math.round((item.value / total) * 100),
    };
  });
  return (
    <div className="absolute left-[767px] top-[600px] w-[763px] h-[402px] border border-[#e5e0d0] bg-linear-to-b from-[#ffc000] from-[5%] via-[#ab7c00] via-[40%] to-[#ffd966] to-[75%]">
      <div className="h-[50px] pt-[11px] text-center text-[24px] leading-[24px] font-bold underline decoration-[3px] underline-offset-[2px] text-[#c55a11] font-['Liberation_Sans',sans-serif]">Regional Sales</div>
      <svg width="761" height="322" viewBox="0 0 761 322" className="font-['Lato',sans-serif]">
        <defs>
          <linearGradient id="sliceShine" x1="0" y1="0" x2="0" y2="1">
            <stop offset="0" stopColor="#fff" stopOpacity="0.18" />
            <stop offset="0.6" stopColor="#fff" stopOpacity="0" />
          </linearGradient>
        </defs>
        {slices.map((s) => (
          <g key={s.name}>
            <path d={s.d} fill={s.color} />
            <path d={s.d} fill="url(#sliceShine)" />
          </g>
        ))}
        {slices.map((s) => (
          <text key={s.name} x={s.lx} y={s.ly + 4} textAnchor="middle" fontSize="12" fill="#fff">{s.pct}%</text>
        ))}
      </svg>
      <div className="flex justify-center gap-[4px] text-[11.5px] leading-[18px] text-[#c55a11] font-['Lato',sans-serif]">
        {regions.map((item) => (
          <div key={item.name} className="flex items-center gap-[3px] whitespace-nowrap">
            <span className={`w-[6px] h-[6px] ${item.swatch}`} />
            {item.name}
          </div>
        ))}
      </div>
    </div>
  );
}

function Sheet() {
  const title = "font-['Liberation_Sans',sans-serif] font-bold text-[#c55a11]";
  return (
    <div className="relative flex-1 min-w-0 bg-white overflow-hidden">
      <div className="grid grid-cols-[64px_64px_192px_64px_17px_170px_64px_64px_64px_169px] grid-rows-[20px_20px_20px_35px_35px]">
        <div className={`col-start-6 row-start-1 bg-[#a9d18e] text-[16px] leading-[20px] pl-[3px] underline ${title}`}>Product Category</div>
        <div className="col-start-6 row-start-2 relative z-[1] h-[23px] bg-white border-y border-l border-[#a6a6a6] text-[12px] text-black pl-[4px] flex items-center justify-between font-['Lato',sans-serif]">
          Electronic
          <span className="w-[20px] h-full bg-[#e0e0e0] border-x border-[#a6a6a6] flex items-center justify-center"><Caret className="border-x-[5px] border-t-[5px] border-t-black" /></span>
        </div>
        <div className={`col-start-3 row-start-4 bg-[#a9d18e] text-center text-[28px] leading-[36px] underline decoration-[3px] underline-offset-[2px] ${title}`}>Total Sales</div>
        <div className={`col-start-3 row-start-5 relative bg-[#a9d18e] text-center text-[24px] leading-[31px] border-2 border-[#217346] outline outline-white -outline-offset-3 ${title}`}>
          394738
          <span className="absolute -right-[4px] -bottom-[4px] w-[6px] h-[6px] bg-[#217346] border border-white" />
        </div>
        <div className={`col-start-10 row-start-4 bg-[#a9d18e] text-center text-[28px] leading-[36px] underline decoration-[3px] underline-offset-[2px] ${title}`}>Profit</div>
        <div className={`col-start-10 row-start-5 bg-[#a9d18e] text-center text-[23px] leading-[36px] ${title}`}>174175.0433</div>
      </div>
      <BarsChart />
      <RegionalLineChart />
      <SalesLineChart />
      <PieChart />
    </div>
  );
}

function SheetTabs() {
  return (
    <div className="h-[28px] flex items-center border-t border-[#a6a6a6] text-[13px] text-[#444] bg-[#dedede]">
      <div className="w-[100px] flex text-[#aaa] pl-[26px] gap-[24px] text-[10px]">
        <span>◂</span>
        <span>▸</span>
      </div>
      <div className="w-[77px] h-[20px] border-x border-[#a6a6a6] flex items-center justify-center">Working</div>
      <div className="w-[89px] flex items-center justify-center">Sales Data</div>
      <div className="w-[94px] h-[24px] mb-[2px] bg-white border-x border-b-2 border-[#a6a6a6] border-b-[#217346] text-[#217346] font-bold flex items-center justify-center">Dash Board</div>
      <div className="ml-[33px] w-[15px] h-[15px] rounded-full border border-[#555] flex items-center justify-center text-[13px] leading-none font-bold">+</div>
      <div className="ml-[1127px] flex flex-col gap-[2px] w-[18px] items-center">
        <span className="w-[2px] h-[2px] bg-[#666]" /><span className="w-[2px] h-[2px] bg-[#666]" /><span className="w-[2px] h-[2px] bg-[#666]" />
      </div>
      <div className="w-[984px] h-[15px] mb-[2px] border border-[#ababab] bg-[#b9b9b9] flex">
        <span className="w-[16px] bg-white border-r border-[#ababab] flex items-center justify-center"><Caret className="border-t-[#666] rotate-90" /></span>
        <span className="w-[923px] bg-white" />
        <span className="ml-auto w-[14px] bg-white border-l border-[#ababab] flex items-center justify-center"><Caret className="border-t-[#666] -rotate-90" /></span>
      </div>
    </div>
  );
}

function StatusBar() {
  return (
    <div className="h-[22px] bg-[#333] text-white text-[11px] flex items-center">
      <span className="pl-[7px]">READY</span>
      <div className="ml-auto flex items-center h-full">
        <span className="w-[38px] h-[21px] bg-black flex items-center justify-center">
          <svg width="14" height="14" viewBox="0 0 14 14" fill="none" stroke="#fff"><path d="M.5 .5h13v13H.5zM4.800 .5v13M9.200 .5v13M.5 4.800h13M.5 9.200h13" /></svg>
        </span>
        <span className="w-[38px] flex justify-center">
          <svg width="14" height="14" viewBox="0 0 14 14" fill="none" stroke="#fff"><path d="M.5 .5h13v13H.5zM3 4h8M3 7h8M3 10h8" /></svg>
        </span>
        <span className="w-[38px] flex justify-center">
          <svg width="14" height="14" viewBox="0 0 14 14" fill="none" stroke="#fff"><path d="M.5 .5h13v13H.5z" /><rect x="3" y="0" width="3" height="9" fill="#fff" stroke="none" /><rect x="8" y="0" width="3" height="9" fill="#fff" stroke="none" /></svg>
        </span>
        <span className="ml-[5px] w-[6px] h-[2px] bg-white" />
        <span className="ml-[4px] w-[100px] h-px bg-white relative">
          <span className="absolute left-[47px] -top-[6px] w-[4px] h-[13px] bg-white" />
        </span>
        <span className="ml-[3px] mr-[6px] text-[15px] font-bold leading-none">+</span>
        <span className="w-[44px] pr-[1px] text-center">100%</span>
      </div>
    </div>
  );
}

function Taskbar() {
  return (
    <div className="h-[40px] flex items-center text-white bg-linear-to-r from-[#1b1512] via-[#3a2b25] to-[#1f1c1b]">
      <div className="w-[48px] flex justify-center">
        <svg width="16" height="16" viewBox="0 0 16 16" fill="#fff"><path d="M0 2.200l6.500-.9V7.500H0zM7.300 1.200L16 0v7.500H7.300zM0 8.300h6.500v6.300L0 13.700zM7.300 8.300H16V16l-8.700-1.200z" /></svg>
      </div>
      <div className="w-[344px] h-[40px] bg-[#f3f3f3] flex items-center overflow-hidden text-[14px] text-[#222]">
        <Search size={17} color="#222" className="ml-[11px] -scale-x-100" />
        <span className="ml-[12px]">Type here to search</span>
        <svg className="ml-auto" width="74" height="40" viewBox="0 0 74 40">
          <path d="M0 16l4 3 3-3-1 5-4 1z" fill="#e58be0" />
          <path d="M14 40c2-8 3-12 0-20M14 22L6 10M16 24l8-16M21 14l2-8M10 16V6" stroke="#5a4128" strokeWidth="3" fill="none" />
          <ellipse cx="50" cy="10" rx="12" ry="8" fill="#c9b840" />
          <ellipse cx="64" cy="12" rx="9" ry="7" fill="#8fa83a" />
          <path d="M50 18v14M62 18v16" stroke="#b07028" strokeWidth="2" />
          <ellipse cx="40" cy="24" rx="7" ry="5" fill="#a8a83a" />
          <path d="M26 40l14-6 24-2 10 4v4z" fill="#9ab840" />
          <path d="M60 30l6-8 8 8v6H60z" fill="#6d7a8c" />
        </svg>
      </div>
      <div className="w-[48px] flex justify-center"><span className="w-[15px] h-[15px] rounded-full border-[3px] border-white" /></div>
      <div className="w-[48px] flex justify-center">
        <svg width="17" height="16" viewBox="0 0 17 16" fill="none" stroke="#fff"><path d="M1 .5h11M1 15.500h11M2.500 3.500h8v9h-8zM15.500 1v6M15.500 9v2M15.500 13v2" /></svg>
      </div>
      <div className="w-[50px] h-full flex items-center justify-center">
        <svg width="24" height="24" viewBox="0 0 24 24">
          <defs><linearGradient id="edgeBlue" x1="0" y1="0" x2="0" y2="1"><stop offset="0" stopColor="#3cc4a0" /><stop offset="1" stopColor="#1470c4" /></linearGradient></defs>
          <circle cx="12" cy="12" r="12" fill="url(#edgeBlue)" />
          <path d="M24 13c0-5-5-8-10-7s-7 6-5 10 8 6 13 2c-4 1-7 0-7-3 0-2 3-3 5-2s4 1 4 0z" fill="#1b1512" />
        </svg>
      </div>
      <div className="w-[49px] h-full flex items-center justify-center border-b-[3px] border-[#9aa9b5] pt-[3px]">
        <svg width="22" height="24" viewBox="0 0 22 24">
          <path d="M1 3h8l2 3h10v15H1z" fill="#f2c447" />
          <rect x="1" y="8" width="20" height="13" fill="#f6d873" />
          <path d="M6 21v-5h10v5" fill="#3d8fd1" />
        </svg>
      </div>
      <div className="w-[49px] h-full flex items-center justify-center border-b-[3px] border-[#9aa9b5] pt-[3px]">
        <svg width="24" height="24" viewBox="0 0 24 24">
          <path d="M0 9l12-9 12 9v15H0z" fill="#1583c9" />
          <path d="M0 9l12 8 12-8v15H0z" fill="#39aee8" />
          <path d="M5 6h14v5l-7 4-7-4z" fill="#fff" />
        </svg>
      </div>
      <div className="w-[49px] h-full flex items-center justify-center border-b-[3px] border-[#9aa9b5] pt-[3px]">
        <svg width="24" height="24" viewBox="0 0 24 24">
          <path d="M12 0a12 12 0 0110.400 6H12a6 6 0 00-5.200 3L3.300 3.500A12 12 0 0112 0z" fill="#dd4a3d" />
          <path d="M22.400 6A12 12 0 0112 24l5.200-9A6 6 0 0018 12a6 6 0 00-.9-3z" fill="#f5c518" />
          <path d="M3.300 3.500L8.500 15a6 6 0 006.500 2.200L12 24A12 12 0 013.300 3.500z" fill="#3aa757" />
          <circle cx="12" cy="12" r="5" fill="#fff" />
          <circle cx="12" cy="12" r="4" fill="#4285f4" />
        </svg>
      </div>
      <div className="w-[49px] h-full flex items-center justify-center">
        <svg width="20" height="26" viewBox="0 0 20 26">
          <path d="M8 1h4l7 21H1z" fill="#f57c14" />
          <path d="M6.500 7h7l1 4h-9zM4.500 14h11l1 4H3.500z" fill="#fff" />
          <rect x="0" y="21" width="20" height="4" rx="1" fill="#e8690a" />
        </svg>
      </div>
      <div className="w-[48px] h-full bg-[#5c524d] border-b-[3px] border-[#9aa9b5] flex items-center justify-center">
        <svg width="22" height="22" viewBox="0 0 22 22">
          <rect x="9" y="3" width="13" height="16" fill="#fff" />
          <path d="M13 3v16M17.500 3v16M9 7h13M9 11h13M9 15h13" stroke="#217346" strokeWidth="1" />
          <path d="M0 2l12-2v22L0 20z" fill="#217346" />
          <path d="M3 6.500l5 9M8 6.500l-5 9" stroke="#fff" strokeWidth="1.500" />
        </svg>
      </div>
      <div className="ml-auto flex items-center text-[13px] whitespace-nowrap">
        <svg width="24" height="22" viewBox="0 0 24 22">
          <path d="M5 15a4.500 4.500 0 01-1-9 7 7 0 0113-1 5 5 0 012 10z" fill="#e8eef5" />
          <path d="M13 10l3 6a2 2 0 11-4 1c0-1 1-4 1-7z" fill="#2f9fe0" />
        </svg>
        <span className="ml-[8px]">29°C</span>
        <span className="ml-[10px]">Light rain</span>
        <ChevronUp className="ml-[15px]" size={16} color="#fff" />
        <Video className="ml-[9px]" size={15} color="#ddd" />
        <BatteryCharging className="ml-[9px]" size={17} color="#fff" />
        <Wifi className="ml-[7px]" size={16} color="#ccc" />
        <Volume2 className="ml-[6px]" size={16} color="#ddd" />
        <span className="ml-[12px] text-[12px]">ENG</span>
        <div className="ml-[10px] w-[62px] text-center text-[12px] leading-[17px]">
          <div>19:24</div>
          <div>30-07-2022</div>
        </div>
        <MessageSquare className="ml-[16px] mr-[24px]" size={18} color="#fff" />
      </div>
    </div>
  );
}

export default function App() {
  return (
    <div className="w-[2560px] h-[1440px] overflow-hidden flex flex-col bg-[#dedede] font-['Open_Sans',sans-serif]">
      <TitleBar />
      <TabRow />
      <Ribbon />
      <FormulaBar />
      <ColumnHeader />
      <div className="flex-1 min-h-0 flex">
        <RowHeader />
        <Sheet />
        <div className="w-[21px] pl-[2px] flex flex-col gap-[2px] border-l border-[#ababab]">
          <div className="w-[15px] flex-1 bg-white border border-[#ababab]" />
          <div className="w-[15px] h-[30px] bg-[#b9b9b9]" />
          <div className="w-[15px] h-[15px] bg-white border border-[#ababab] flex items-center justify-center"><Caret /></div>
        </div>
      </div>
      <SheetTabs />
      <StatusBar />
      <Taskbar />
    </div>
  );
}
